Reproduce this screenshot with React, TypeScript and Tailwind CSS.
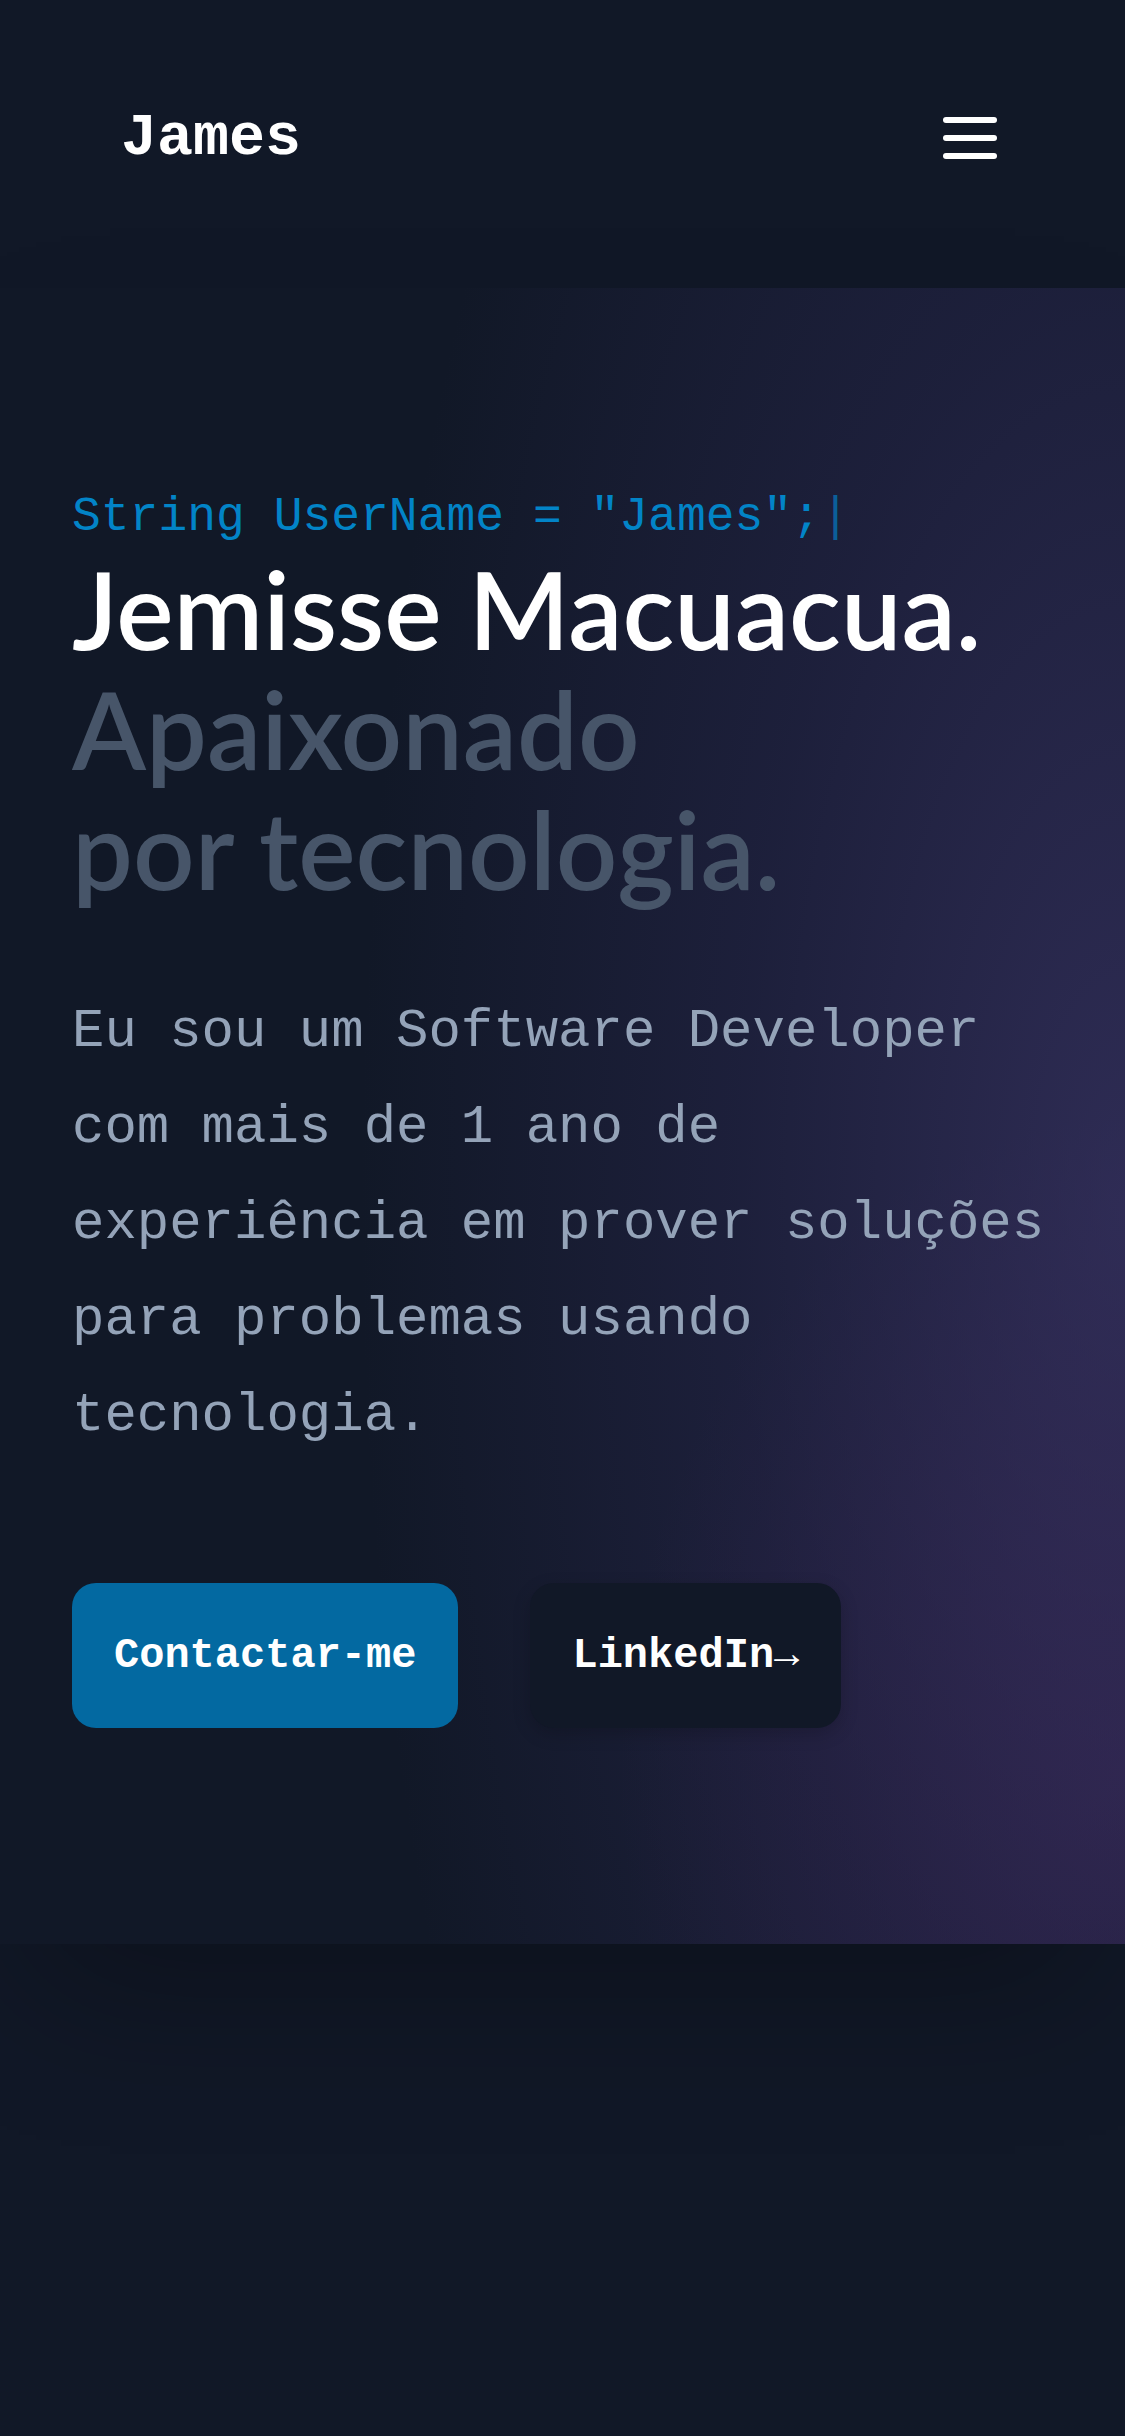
const mono = { fontFamily: '"Liberation Mono", "DejaVu Sans Mono", monospace' };

function Navbar() {
  return (
    <nav className="flex h-[276px] items-center justify-between pl-[121px] pr-[128px]">
      <span className="text-[60px] font-bold leading-none text-white" style={mono}>
        James
      </span>
      <button className="flex flex-col gap-[12px]" aria-label="menu">
        <span className="block h-[6px] w-[54px] rounded-full bg-white" />
        <span className="block h-[6px] w-[54px] rounded-full bg-white" />
        <span className="block h-[6px] w-[54px] rounded-full bg-white" />
      </button>
    </nav>
  );
}

function Hero() {
  return (
    <section className="mt-[12px] bg-[#111827] bg-[image:radial-gradient(ellipse_68%_110%_at_100%_55%,rgba(64,56,112,0.62)_0%,rgba(52,46,98,0.34)_50%,transparent_100%),radial-gradient(ellipse_45%_40%_at_100%_90%,rgba(90,40,110,0.3),transparent)] px-[72px] pt-[198px] pb-[216px] shadow-[0_75px_150px_-36px_rgba(0,0,0,0.3)]">
      <p className="text-[48px] leading-[62px] text-[#0284c7]" style={mono}>
        String UserName = "James";<span className="text-[#0b5f99]">|</span>
      </p>
      <h1
        className="text-[108px] font-semibold leading-[120px] tracking-[0px]"
        style={{ fontFamily: 'Lato, "Open Sans", sans-serif' }}
      >
        <span className="block text-white">Jemisse Macuacua.</span>
        <span className="block text-[#475569]">Apaixonado</span>
        <span className="block text-[#475569]">por tecnologia.</span>
      </h1>
      <p className="mt-[76px] text-[54px] leading-[96px] text-[#94a3b8]" style={mono}>
        Eu sou um Software Developer com mais de 1 ano de experiência em prover soluções para problemas usando
        tecnologia.
      </p>
      <div className="mt-[119px] flex gap-[72px]" style={mono}>
        <a className="flex h-[145px] items-center rounded-[24px] bg-[#0369a1] px-[42px] text-[42px] font-bold leading-[60px] text-white">
          Contactar-me
        </a>
        <a className="flex h-[145px] items-center rounded-[24px] bg-[#111827] px-[42px] text-[42px] font-bold leading-[60px] text-white shadow-[0_6px_18px_rgba(0,0,0,0.18)]">
          LinkedIn<span className="font-normal">→</span>
        </a>
      </div>
    </section>
  );
}

export default function App() {
  return (
    <div className="min-h-screen bg-[#111827]">
      <Navbar />
      <Hero />
    </div>
  );
}
